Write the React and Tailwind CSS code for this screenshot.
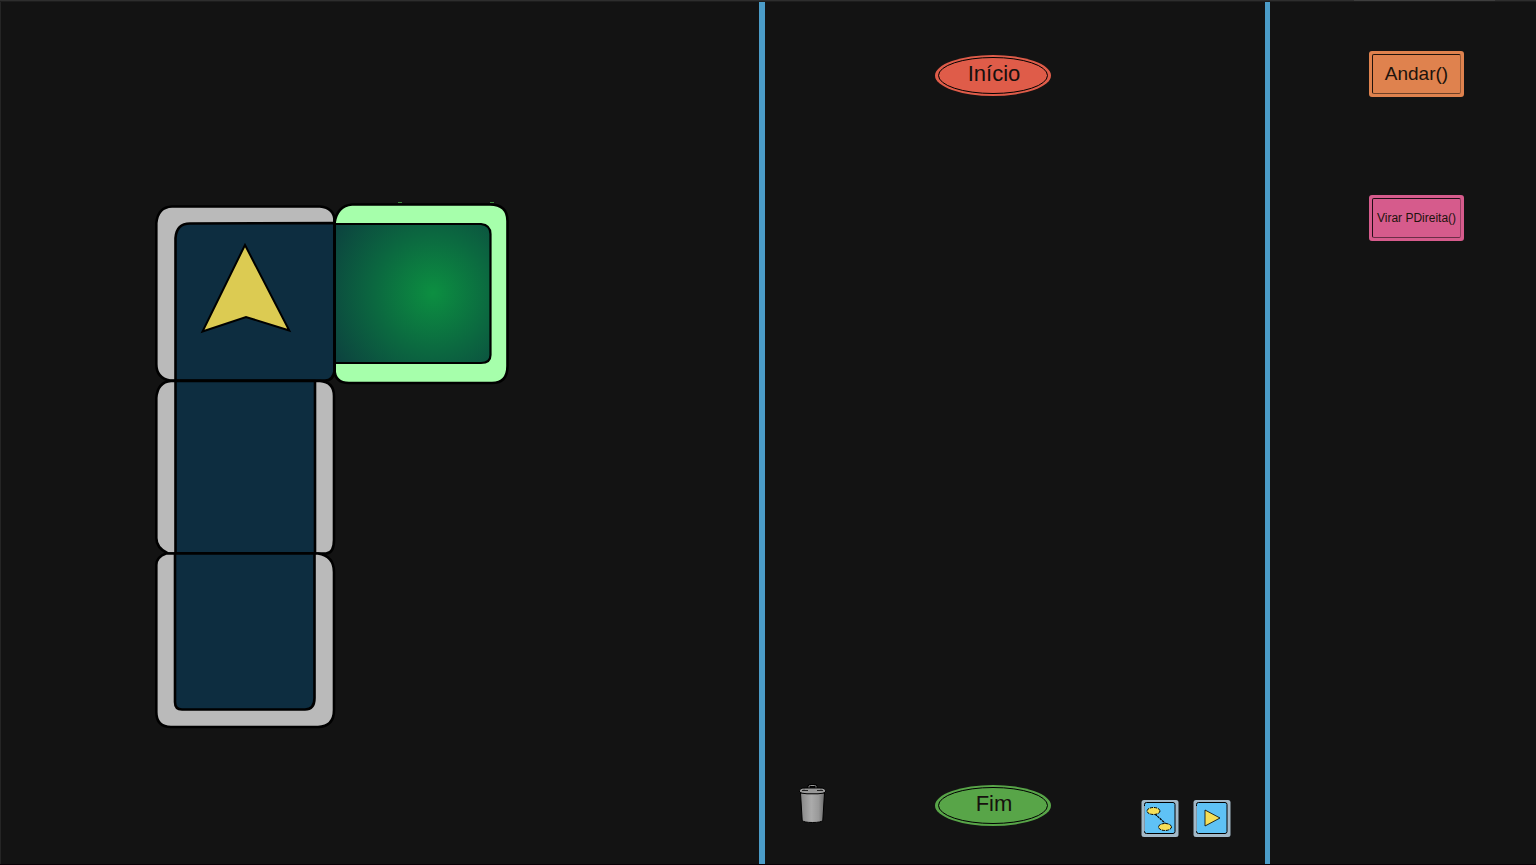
import React from "react";

const NAVY = "#0d2d40";
const GRAY = "#bababa";

function Board() {
  return (
    <svg
      viewBox="153 200 360 532"
      className="block w-[360px] h-[532px]"
      role="img"
      aria-label="Tabuleiro"
      stroke="#000"
      strokeWidth="2.6"
      strokeLinejoin="round"
    >
      <defs>
        <radialGradient id="goal" gradientUnits="userSpaceOnUse" cx="433" cy="293" r="118">
          <stop offset="0" stopColor="#0c8f41" />
          <stop offset="0.5" stopColor="#0b6840" />
          <stop offset="1" stopColor="#0c423f" />
        </radialGradient>
      </defs>

      <path
        d="M352 204.500H490Q507.500 204.500 507.500 221V366Q507.500 383 492 383H349Q334.500 383 334.500 369V223Q337 206 352 204.500Z"
        fill="#a6ffab"
      />
      <path d="M334.500 224H481Q490.500 225 490.500 234V355Q490.500 363 481 363H334.500Z" fill="url(#goal)" strokeWidth="2.2" />
      <path d="M398 202.500h4M490 202.500h4" stroke="#3c8a3c" strokeWidth="1" />

      <path
        d="M172 206.500H320Q334.500 208 334.500 221V371Q333 380.500 325 380.500H170Q156.300 378 156.300 364V223Q158 207 172 206.500Z"
        fill={GRAY}
      />
      <path d="M175.500 380.500V238Q176.500 223.500 190 223.500L334.500 223V371Q333 380.500 325 380.500Z" fill={NAVY} />

      <path
        d="M171 381H320Q334 382 334 396V540Q334 553 326 553.500H168Q156.300 548 156.300 538V398Q157.500 382 171 381Z"
        fill={GRAY}
      />
      <path d="M175.500 381H315V553.500H175.500Z" fill={NAVY} />

      <path
        d="M166 553.500H318Q334 556 334 572V710Q334 726.500 318 727H171Q156.300 727 156.300 712V565Q156.300 557 166 553.500Z"
        fill={GRAY}
      />
      <path d="M175 553.500H314.500V698Q314.500 709.500 305 709.500H182Q175 709.500 175 702Z" fill={NAVY} />

      <path d="M334.500 218V372" fill="none" />
      <path d="M245 245L289.300 330.500L246 317L202.500 331.500Z" fill="#dccb52" strokeWidth="2" strokeLinejoin="miter" />
    </svg>
  );
}

function Terminal({ label, fill }) {
  return (
    <button type="button" className="relative flex h-[42px] w-[116px] shrink-0 items-center justify-center">
      <svg viewBox="0 0 116 42" className="absolute inset-0 h-full w-full" aria-hidden="true">
        <ellipse cx="58" cy="21.500" rx="58" ry="20.500" fill={fill} />
        <ellipse cx="58" cy="21.500" rx="54.500" ry="18" fill="none" stroke="#000" strokeWidth="1" />
      </svg>
      <span className="relative pb-0.5 pl-0.5 text-[22px] leading-6 text-[#16100e]">{label}</span>
    </button>
  );
}

function Block({ label, className, textClass }) {
  return (
    <button
      type="button"
      className={`flex h-[46px] w-[95px] rounded-[3px] border-[3px] ${className}`}
    >
      <span
        className={`flex h-full w-full items-center justify-center rounded-[2px] border border-black/85 border-r-black/30 border-b-black/50 whitespace-nowrap text-[#20130c] ${textClass}`}
      >
        {label}
      </span>
    </button>
  );
}

function Trash() {
  return (
    <svg viewBox="0 0 28 40" className="block h-10 w-7" aria-hidden="true">
      <defs>
        <linearGradient id="can" x1="0" x2="1" y1="0" y2="0">
          <stop offset="0" stopColor="#858585" />
          <stop offset="0.450" stopColor="#ababab" />
          <stop offset="0.750" stopColor="#999" />
          <stop offset="1" stopColor="#6c6c6c" />
        </linearGradient>
      </defs>
      <path d="M10 5V2.500Q10 1.500 11.500 1.500H15.500Q17 1.500 17 2.500V5" fill="none" stroke="#000" strokeWidth="3" />
      <path d="M10 5V2.500Q10 1.500 11.500 1.500H15.500Q17 1.500 17 2.500V5" fill="none" stroke="#999" strokeWidth="1" />
      <path d="M1.500 9H25.500L23.800 36.500Q22 38.500 13.500 38.500T3.200 36.500Z" fill="url(#can)" stroke="#000" strokeWidth="1" />
      <path d="M0.500 6.500Q1 4 4 4H23Q26 4 26.500 6.500V8Q25 9.500 19 9.800H8Q2 9.500 0.500 8Z" fill="#989898" stroke="#000" strokeWidth="1" />
      <path d="M3 6.500H9M18 6.500H24" fill="none" stroke="#222" strokeWidth="1" />
      <path d="M5 4V5.500M22 4V5.500" fill="none" stroke="#333" strokeWidth="1" />
    </svg>
  );
}

function Tool({ label, children }) {
  return (
    <button type="button" aria-label={label} className="block h-[38px] w-[38px]">
      <svg viewBox="0 0 38 38" className="block h-full w-full" aria-hidden="true">
        <rect x="0.500" y="1" width="37" height="37" rx="2.500" fill="#a3b9c8" />
        <rect x="3.500" y="3.500" width="30.500" height="31" rx="2" fill="#5fc2f5" stroke="#000" strokeWidth="1" />
        <path d="M3.500 7V32" stroke="#8299aa" strokeWidth="1" />
        {children}
      </svg>
    </button>
  );
}

export default function App() {
  return (
    <div className="flex min-h-screen flex-col border-b border-[#090006] bg-[#131313] font-['Liberation_Sans',Arial,sans-serif]">
      <div className="flex h-px bg-[#2e2e2e]">
        <div className="ml-auto mr-[41px] w-[141px] bg-[#3e3e3e]" />
      </div>
      <div className="h-px bg-[#1d1d1d]" />
      <div className="grid grow grid-cols-[759fr_511fr_266fr]">
        <main className="border-l border-[#252525] pt-[198px] pl-[152px]">
          <Board />
        </main>

        <section
          aria-label="Programa"
          className="flex flex-col justify-between border-l-[6px] border-r-[5px] border-[#4b9cc8] pt-[52px] pb-[27px]"
        >
          <div className="pl-[170px]">
            <Terminal label="Início" fill="#df5c49" />
          </div>
          <div className="flex items-start px-[34px]">
            <button type="button" aria-label="Lixeira">
              <Trash />
            </button>
            <div className="ml-[108px]">
              <Terminal label="Fim" fill="#58a548" />
            </div>
            <div className="mt-[15px] ml-auto flex gap-[14px]">
              <Tool label="Conectar">
                <path d="M14 15L25 25" stroke="#000" strokeWidth="1.200" strokeDasharray="2.500 0.700" />
                <ellipse cx="12.500" cy="12" rx="6.500" ry="3.500" fill="#f5df58" stroke="#000" strokeDasharray="3 1" />
                <ellipse cx="24" cy="28" rx="6.500" ry="3.500" fill="#f5df58" stroke="#000" strokeDasharray="3 1" />
              </Tool>
              <Tool label="Executar">
                <path d="M12 11L27 19L12 27Z" fill="#f5df58" stroke="#000" strokeWidth="0.800" strokeLinejoin="round" />
              </Tool>
            </div>
          </div>
        </section>

        <aside aria-label="Comandos" className="flex flex-col items-center gap-[98px] pt-[49px] pl-[27px]">
          <Block label="Andar()" className="border-[#df824e] bg-[#df824e]" textClass="text-[19px]" />
          <Block label="Virar PDireita()" className="border-[#d65b8c] bg-[#d65b8c]" textClass="text-[12px]" />
        </aside>
      </div>
    </div>
  );
}
